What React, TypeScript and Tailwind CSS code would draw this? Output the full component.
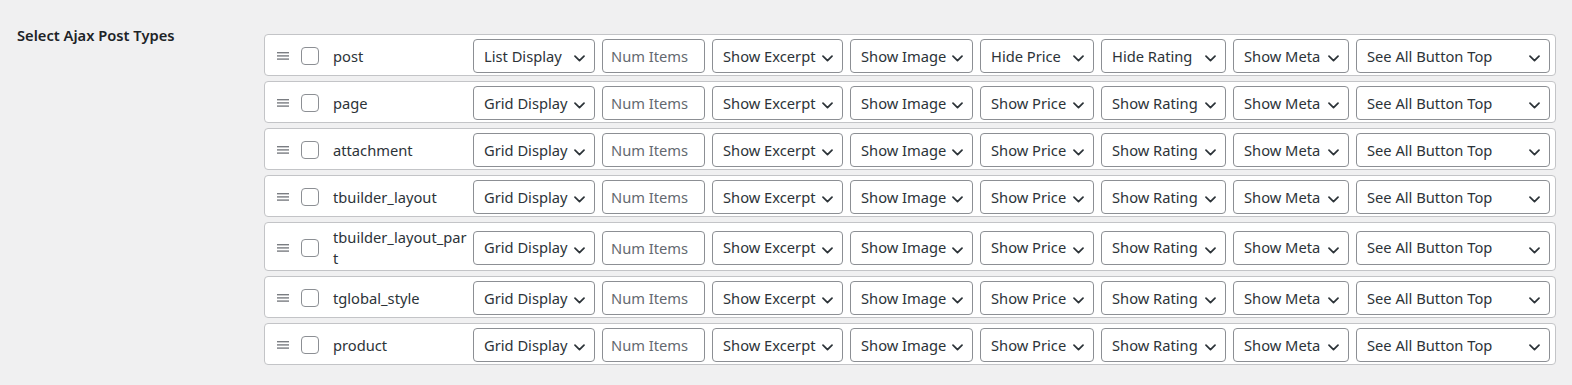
import React from "react";

type Row = {
  name: string;
  display: string;
  price: string;
  rating: string;
};

const rows: Row[] = [
  { name: "post", display: "List Display", price: "Hide Price", rating: "Hide Rating" },
  { name: "page", display: "Grid Display", price: "Show Price", rating: "Show Rating" },
  { name: "attachment", display: "Grid Display", price: "Show Price", rating: "Show Rating" },
  { name: "tbuilder_layout", display: "Grid Display", price: "Show Price", rating: "Show Rating" },
  { name: "tbuilder_layout_part", display: "Grid Display", price: "Show Price", rating: "Show Rating" },
  { name: "tglobal_style", display: "Grid Display", price: "Show Price", rating: "Show Rating" },
  { name: "product", display: "Grid Display", price: "Show Price", rating: "Show Rating" },
];

const FONT = '"Segoe UI", "Noto Sans", sans-serif';

function Chevron() {
  return (
    <svg width="11" height="7" viewBox="0 0 11 7" className="block">
      <path d="M1 1.2 L5.5 5.6 L10 1.2" fill="none" stroke="#2c3338" strokeWidth="1.7" strokeLinecap="round" strokeLinejoin="round" />
    </svg>
  );
}

function Select({ value, width }: { value: string; width: string }) {
  return (
    <div className={`relative h-[34px] shrink-0 ${width}`}>
      <select
        defaultValue={value}
        className="h-full w-full appearance-none rounded-[4px] border border-[#8c8f94] bg-white pl-[10px] pr-[24px] text-[14.7px] text-[#2c3338] outline-none"
        style={{ fontFamily: FONT }}
      >
        <option>{value}</option>
      </select>
      <div className="pointer-events-none absolute right-[10px] top-[16px]">
        <Chevron />
      </div>
    </div>
  );
}

function DragIcon() {
  return (
    <svg width="12" height="8" viewBox="0 0 12 8" className="block shrink-0">
      <rect x="0" y="0" width="12" height="1.4" fill="#7a7d82" />
      <rect x="0" y="3.2" width="12" height="1.4" fill="#7a7d82" />
      <rect x="0" y="6.4" width="12" height="1.4" fill="#7a7d82" />
    </svg>
  );
}

function PostRow({ row }: { row: Row }) {
  return (
    <div className="flex min-h-[42px] w-[1292px] items-center rounded-[4px] border border-[#c3c4c7] bg-white pb-[2px] pl-[12px] pr-[5px] pt-[4px]">
      <DragIcon />
      <div className="ml-[12px] h-[18px] w-[18px] shrink-0 rounded-[4px] border border-[#8c8f94] bg-white" />
      <div className="ml-[14px] w-[138px] shrink-0 break-all text-[14.7px] leading-[20.5px] text-[#2c3338]">
        {row.name}
      </div>
      <div className="ml-[2px] flex items-center gap-[7px]">
        <Select value={row.display} width="w-[122px]" />
        <input
          placeholder="Num Items"
          className="h-[34px] w-[103px] shrink-0 rounded-[4px] border border-[#8c8f94] bg-white px-[8px] text-[14.7px] text-[#2c3338] outline-none placeholder:text-[#646970]"
          style={{ fontFamily: FONT }}
        />
        <Select value="Show Excerpt" width="w-[131px]" />
        <Select value="Show Image" width="w-[123px]" />
        <Select value={row.price} width="w-[114px]" />
        <Select value={row.rating} width="w-[125px]" />
        <Select value="Show Meta" width="w-[116px]" />
        <Select value="See All Button Top" width="w-[194px]" />
      </div>
    </div>
  );
}

export default function App() {
  return (
    <div
      className="flex h-[385px] w-full bg-[#f0f0f1] text-[#1d2327]"
      style={{ fontFamily: FONT }}
    >
      <div className="w-[264px] shrink-0 pl-[17px] pt-[25px] text-[14.7px] font-semibold leading-[20px] text-[#1d2327]">
        Select Ajax Post Types
      </div>
      <div className="flex flex-col gap-[5px] pt-[34px]">
        {rows.map((r) => (
          <PostRow key={r.name} row={r} />
        ))}
      </div>
    </div>
  );
}
